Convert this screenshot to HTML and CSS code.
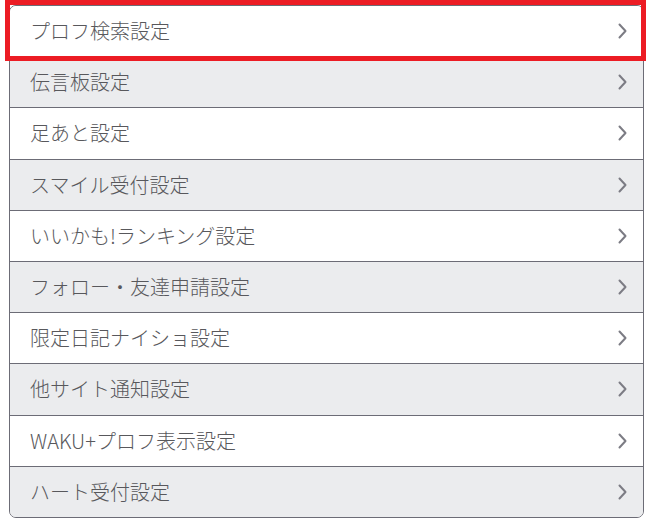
FILE: index.html
```html
<!DOCTYPE html>
<html lang="ja">
<head>
<meta charset="utf-8">
<title>設定</title>
<link rel="stylesheet" href="styles.css">
</head>
<body>
<div class="wrap">
  <ul class="menu">
    <li class="row"><span class="label">プロフ検索設定</span><svg class="chev" viewBox="0 0 9 16"><path d="M1.5 1.5 L7.5 8 L1.5 14.5"/></svg></li>
    <li class="row alt"><span class="label">伝言板設定</span><svg class="chev" viewBox="0 0 9 16"><path d="M1.5 1.5 L7.5 8 L1.5 14.5"/></svg></li>
    <li class="row"><span class="label">足あと設定</span><svg class="chev" viewBox="0 0 9 16"><path d="M1.5 1.5 L7.5 8 L1.5 14.5"/></svg></li>
    <li class="row alt"><span class="label">スマイル受付設定</span><svg class="chev" viewBox="0 0 9 16"><path d="M1.5 1.5 L7.5 8 L1.5 14.5"/></svg></li>
    <li class="row"><span class="label">いいかも!ランキング設定</span><svg class="chev" viewBox="0 0 9 16"><path d="M1.5 1.5 L7.5 8 L1.5 14.5"/></svg></li>
    <li class="row alt"><span class="label">フォロー・友達申請設定</span><svg class="chev" viewBox="0 0 9 16"><path d="M1.5 1.5 L7.5 8 L1.5 14.5"/></svg></li>
    <li class="row"><span class="label">限定日記ナイショ設定</span><svg class="chev" viewBox="0 0 9 16"><path d="M1.5 1.5 L7.5 8 L1.5 14.5"/></svg></li>
    <li class="row alt"><span class="label">他サイト通知設定</span><svg class="chev" viewBox="0 0 9 16"><path d="M1.5 1.5 L7.5 8 L1.5 14.5"/></svg></li>
    <li class="row"><span class="label">WAKU+プロフ表示設定</span><svg class="chev" viewBox="0 0 9 16"><path d="M1.5 1.5 L7.5 8 L1.5 14.5"/></svg></li>
    <li class="row alt"><span class="label">ハート受付設定</span><svg class="chev" viewBox="0 0 9 16"><path d="M1.5 1.5 L7.5 8 L1.5 14.5"/></svg></li>
  </ul>
  <div class="highlight"></div>
</div>
</body>
</html>
```

FILE: styles.css
```css
html, body {
  margin: 0;
  background: #ffffff;
}
body {
  padding: 5px 9px 0 9px;
  font-family: "Noto Sans CJK JP", "Noto Sans", sans-serif;
}
.wrap {
  position: relative;
}
.menu {
  list-style: none;
  margin: 0;
  padding: 0;
  border: 1px solid #6c6c76;
  border-radius: 7px;
  overflow: hidden;
}
.row {
  display: flex;
  align-items: center;
  justify-content: space-between;
  height: 50.2px;
  padding: 0 16px 0 20px;
  background: #ffffff;
  border-top: 1px solid #6c6c76;
}
.row:first-child {
  border-top: none;
}
.row.alt {
  background: #ebecee;
}
.label {
  font-size: 20px;
  font-weight: 300;
  color: #58585c;
  line-height: 1;
}
.chev {
  width: 9px;
  height: 16px;
  fill: none;
  stroke: #7c7c84;
  stroke-width: 2;
  stroke-linecap: round;
  stroke-linejoin: round;
}
.highlight {
  position: absolute;
  left: -4px;
  top: -5px;
  width: 641px;
  height: 61px;
  box-sizing: border-box;
  border: 5px solid #ec1c24;
}
```
